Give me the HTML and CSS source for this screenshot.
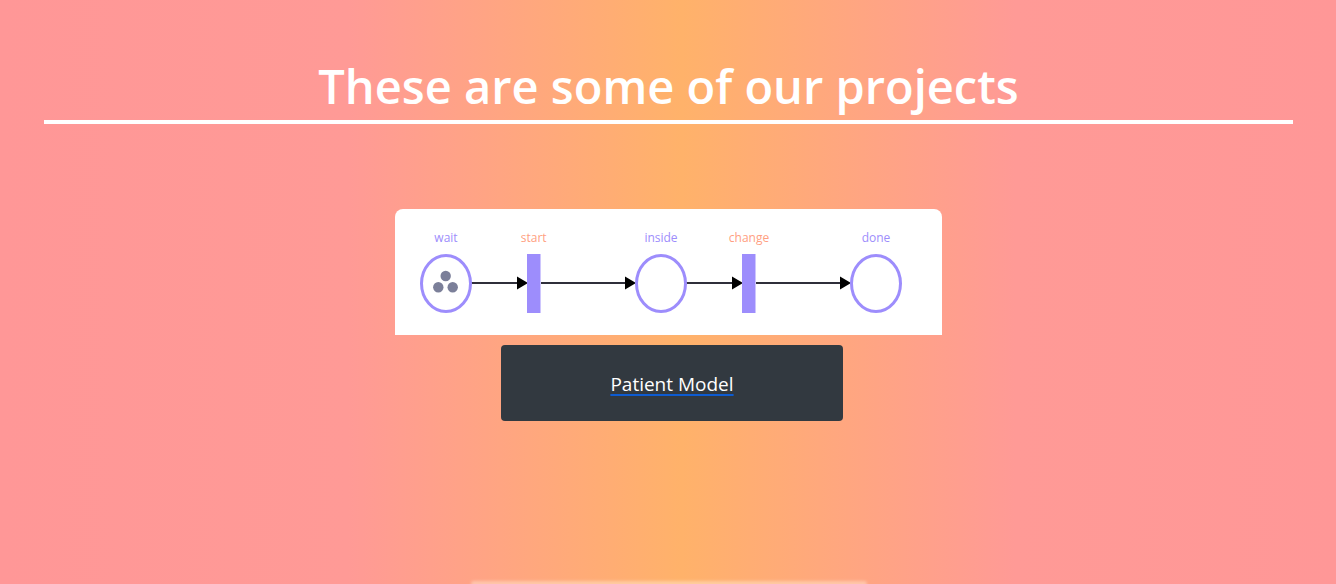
FILE: index.html
```html
<!DOCTYPE html>
<html lang="en">
<head>
<meta charset="utf-8">
<title>Projects</title>
<link rel="stylesheet" href="styles.css">
</head>
<body>
<main class="page">
  <header class="intro">
    <h1 class="title">These are some of our projects</h1>
  </header>
  <section class="projects">
    <article class="project">
      <div class="project-image">
        <svg class="petri" viewBox="0 0 547 126" width="547" height="126" xmlns="http://www.w3.org/2000/svg">
          <g class="labels" font-family="'Open Sans', 'Noto Sans', sans-serif" font-size="12" text-anchor="middle">
            <text x="51" y="33" fill="#9d8dfc">wait</text>
            <text x="138.7" y="33" fill="#ff9f82">start</text>
            <text x="266" y="33" fill="#9d8dfc">inside</text>
            <text x="354" y="33" fill="#ff9f82">change</text>
            <text x="481" y="33" fill="#9d8dfc">done</text>
          </g>
          <g stroke="#2f2f3a" stroke-width="2">
            <line x1="76" y1="74" x2="123" y2="74"/>
            <line x1="146" y1="74" x2="231" y2="74"/>
            <line x1="291" y1="74" x2="338" y2="74"/>
            <line x1="361" y1="74" x2="446" y2="74"/>
          </g>
          <g fill="#000">
            <polygon points="122,67.5 133,74 122,80.5"/>
            <polygon points="230,67.5 241,74 230,80.5"/>
            <polygon points="337,67.5 348,74 337,80.5"/>
            <polygon points="445,67.5 456,74 445,80.5"/>
          </g>
          <g fill="#fff" stroke="#9d8dfc" stroke-width="3">
            <ellipse cx="51" cy="74.5" rx="24.5" ry="28"/>
            <ellipse cx="266" cy="74.5" rx="24.5" ry="28"/>
            <ellipse cx="481" cy="74.5" rx="24.5" ry="28"/>
          </g>
          <g fill="#9d8dfc">
            <rect x="132" y="45" width="13.5" height="59"/>
            <rect x="347" y="45" width="13.5" height="59"/>
          </g>
          <g fill="#7b7f99">
            <circle cx="50.7" cy="67" r="5.2"/>
            <circle cx="43.3" cy="78.3" r="5.2"/>
            <circle cx="57.7" cy="78.3" r="5.2"/>
          </g>
        </svg>
      </div>
      <div class="project-button">
        <a class="project-link" href="#">Patient Model</a>
      </div>
    </article>
    <div class="project-next"></div>
  </section>
</main>
</body>
</html>
```
FILE: styles.css
```css
html, body {
  margin: 0;
  padding: 0;
}

body {
  min-height: 584px;
  overflow: hidden;
  font-family: "Open Sans", "Noto Sans", sans-serif;
  background: linear-gradient(90deg, #ff9797 0%, #ff9a96 26%, #ffb26a 51%, #ff9a96 76%, #ff9797 100%);
  background-attachment: fixed;
}

.page {
  padding: 0 43px 0 44px;
}

.intro {
  padding-top: 54px;
  border-bottom: 4px solid #ffffff;
}

.title {
  margin: 0;
  padding-bottom: 1px;
  text-align: center;
  color: #ffffff;
  font-size: 47px;
  font-weight: 600;
  line-height: 65px;
}

.projects {
  display: flex;
  flex-direction: column;
  align-items: center;
  padding-top: 85px;
}

.project {
  display: flex;
  flex-direction: column;
  align-items: center;
  gap: 10px;
}

.project-image {
  width: 547px;
  height: 126px;
  background: #ffffff;
  border-radius: 8px 8px 0 0;
  overflow: hidden;
}

.petri {
  display: block;
}

.project-button {
  width: 342px;
  height: 76px;
  margin-left: 7px;
  background: #323940;
  border-radius: 4px;
  display: flex;
  align-items: center;
  justify-content: center;
}

.project-link {
  color: #ffffff;
  font-size: 19px;
  line-height: 24px;
  padding-top: 1px;
  text-decoration: underline;
  text-decoration-color: #0d5bd1;
  text-decoration-thickness: 2px;
  text-underline-offset: 3px;
}

.project-next {
  margin-top: 160px;
  width: 396px;
  height: 6px;
  border-radius: 3px;
  background: rgba(255, 240, 220, 0.45);
  filter: blur(1.5px);
}
```
